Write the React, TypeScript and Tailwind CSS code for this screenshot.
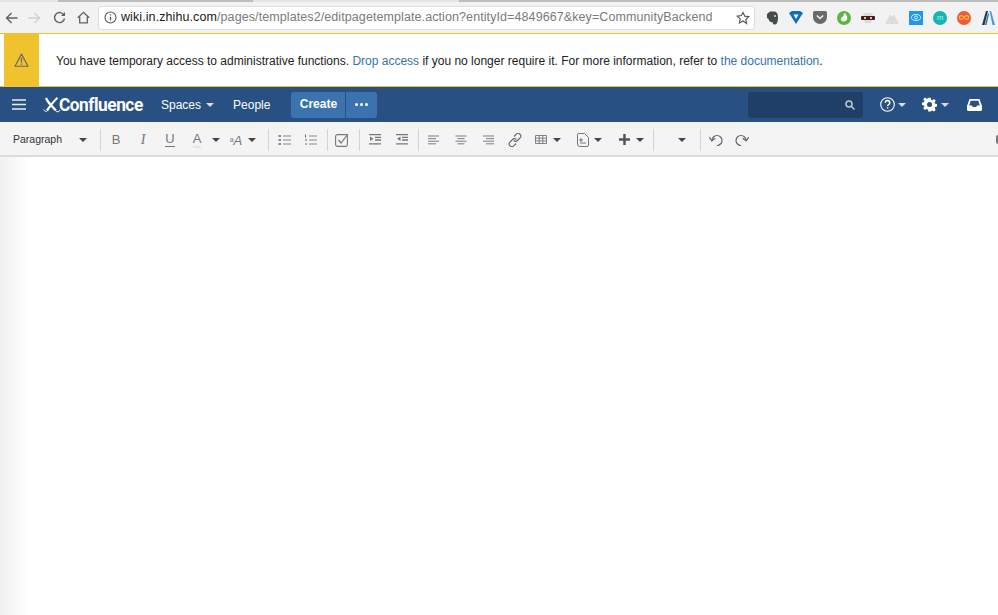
import React from "react";

const Caret = ({ c = "#444" }: { c?: string }) => (
  <svg width="8" height="4" viewBox="0 0 8 4" className="shrink-0"><path d="M0 0h8L4 4z" fill={c} /></svg>
);

const Slot = ({ w, children, className = "" }: { w: string; children?: React.ReactNode; className?: string }) => (
  <div className={`flex h-full shrink-0 items-center justify-center ${w} ${className}`}>{children}</div>
);

const Sep = () => <div className="h-[22px] w-px shrink-0 bg-[#d4d4d4]" />;

const Ico = ({ children, s = 14, w }: { children: React.ReactNode; s?: number; w?: number }) => (
  <svg width={w ?? s} height={s} viewBox={`0 0 ${w ?? s} ${s}`} fill="none" stroke="#6b6b6b" strokeWidth="1.2">{children}</svg>
);

const Lines = ({ rows }: { rows: [number, number][] }) => (
  <Ico s={10} w={12}>
    {rows.map(([a, b], i) => (
      <path key={i} d={`M${a} ${1 + i * 2.6}H${b}`} strokeWidth="1.1" stroke="#888" />
    ))}
  </Ico>
);

const ListIcon = ({ numbered }: { numbered?: boolean }) => (
  <Ico s={12} w={13}>
    <path d="M5 2h8M5 6h8M5 10h8" stroke="#888" />
    {numbered ? (
      <path d="M1.5 .5v3M1 6h2M1 10h2" stroke="#666" strokeWidth="1" />
    ) : (
      <path d="M.5 2h2.500M.5 6h2.500M.5 10h2.500" stroke="#666" strokeWidth="1.700" />
    )}
  </Ico>
);

const IndentIcon = ({ out }: { out?: boolean }) => (
  <Ico s={11} w={12}>
    <path d="M0 .7h12M6 3.400h6M6 6h6M0 9.800h12" stroke="#777" strokeWidth="1.300" />
    <path d={out ? "M4.500 2.500v4.500L1 4.800z" : "M1 2.500v4.500L4.500 4.800z"} fill="#777" stroke="none" />
  </Ico>
);

export default function App() {
  return (
    <div className="flex h-[615px] w-[998px] flex-col overflow-hidden bg-white font-['Liberation_Sans',sans-serif]">
      {/* Browser chrome */}
      <div className="flex h-[33px] shrink-0 flex-col bg-[#f2f2f2]">
        <div className="flex h-[2px] shrink-0 bg-[#e4e4e4]">
          <div className="ml-[58px] h-full w-[195px] bg-[#bdbdbd]" />
          <div className="ml-[206px] h-full w-[539px] bg-[#bdbdbd]" />
        </div>
        <div className="flex min-h-0 flex-1 items-center">
          <Slot w="w-[22px]">
            <svg width="13" height="12" viewBox="0 0 13 12" fill="none" stroke="#5f6368" strokeWidth="1.400"><path d="M12.500 6H1.500M6.500 1L1.500 6l5 5" /></svg>
          </Slot>
          <Slot w="w-[24px]">
            <svg width="13" height="12" viewBox="0 0 13 12" fill="none" stroke="#d0d0d0" strokeWidth="1.400"><path d="M.5 6h11M6.500 1l5 5-5 5" /></svg>
          </Slot>
          <Slot w="w-[24px]" className="ml-[1px]">
            <svg width="13" height="13" viewBox="0 0 13 13" fill="none" stroke="#5f6368" strokeWidth="1.400"><path d="M11 4.200A5 5 0 1 0 11.500 7.500" /><path d="M12 1v4H8z" fill="#5f6368" stroke="none" /></svg>
          </Slot>
          <Slot w="w-[24px]">
            <svg width="13" height="13" viewBox="0 0 13 13" fill="none" stroke="#5f6368" strokeWidth="1.300"><path d="M.8 6.800L6.500 1.300l5.700 5.500M2.700 5.800v6h7.600v-6" /></svg>
          </Slot>
          <div className="ml-[3px] flex h-[24px] w-[657px] shrink-0 items-center rounded-[3px] border border-[#dedede] bg-white pl-[5px]">
            <svg width="13" height="13" viewBox="0 0 13 13" fill="none" stroke="#555" strokeWidth="1.100" className="shrink-0"><circle cx="6.500" cy="6.500" r="5.500" /><path d="M6.500 5.800v3.700M6.500 3.300v1.200" strokeWidth="1.300" /></svg>
            <span className="ml-[4px] whitespace-nowrap text-[12.500px] tracking-[0.09px] text-[#7a7a7a]">
              <span className="text-[#1a1a1a]">wiki.in.zhihu.com</span>/pages/templates2/editpagetemplate.action?entityId=4849667&amp;key=CommunityBackend
            </span>
            <svg width="14" height="14" viewBox="0 0 24 24" fill="none" stroke="#555" strokeWidth="2" className="ml-auto mr-[4px] shrink-0"><path d="M12 2.500l3 6.300 6.800.9-5 4.800 1.300 6.900L12 17.100l-6.100 3.300 1.300-6.900-5-4.800 6.800-.9z" /></svg>
          </div>
          {/* Extensions */}
          <div className="ml-[5px] flex items-center">
            <Slot w="w-[24px]">
              <svg width="13" height="14" viewBox="0 0 13 14"><path d="M1 3l3-2.500h4C11 .5 12 3 12 6c0 4-.5 7-3 7.500-2 .3-2.500-1-2-2-2.500 0-4-1.500-4.500-3.500L1 7z" fill="#454b4f" /><circle cx="9" cy="5" r="1" fill="#ddd" /></svg>
            </Slot>
            <Slot w="w-[24px]">
              <svg width="14" height="13" viewBox="0 0 14 13"><path d="M0 2l3-2h8l3 2-7 11z" fill="#0f6fb5" /><path d="M4.500 3.500h5L7 8z" fill="#fff" /></svg>
            </Slot>
            <Slot w="w-[24px]">
              <svg width="14" height="13" viewBox="0 0 14 13"><path d="M0 1.500Q0 0 1.500 0h11Q14 0 14 1.500V6a7 7 0 0 1-14 0z" fill="#6a6a6a" /><path d="M3.800 4.500L7 7.500l3.200-3" fill="none" stroke="#eee" strokeWidth="1.600" /></svg>
            </Slot>
            <Slot w="w-[24px]">
              <svg width="14" height="14" viewBox="0 0 14 14"><circle cx="7" cy="7" r="7" fill="#5cb83c" /><path d="M7 2c1.500 1 2 1 2.500 2.500C11 6 10.500 10.500 7 10.500S3.500 7.500 4.500 6.500C6 6 7 4 7 2z" fill="#fff" /></svg>
            </Slot>
            <Slot w="w-[24px]">
              <svg width="14" height="10" viewBox="0 0 14 10"><path d="M3 0h8l1 3H2z" fill="#ddd" /><rect y="3" width="14" height="4" rx="1" fill="#4a1a14" /><circle cx="4" cy="5" r="1" fill="#fff" /><circle cx="10" cy="5" r="1" fill="#fff" /><path d="M3 7h8l-1 3H4z" fill="#d8d8d8" /></svg>
            </Slot>
            <Slot w="w-[24px]">
              <svg width="14" height="13" viewBox="0 0 14 13"><path d="M7 0l7 13H0z" fill="#dcdcdc" /><path d="M7 0l2 4-2 1-2-1z" fill="#f7f7f7" /></svg>
            </Slot>
            <Slot w="w-[24px]">
              <div className="flex h-[14px] w-[14px] items-center justify-center bg-[#1e97f3]">
                <svg width="10" height="7" viewBox="0 0 10 7" fill="none" stroke="#fff" strokeWidth=".8"><ellipse cx="5" cy="3.500" rx="4.500" ry="3" /><circle cx="5" cy="3.500" r="1.500" /></svg>
              </div>
            </Slot>
            <Slot w="w-[24px]">
              <div className="flex h-[14px] w-[14px] items-center justify-center rounded-full bg-[#16b5ad] text-[8px] leading-none text-[#bdeeea]">m</div>
            </Slot>
            <Slot w="w-[24px]">
              <div className="flex h-[14px] w-[14px] items-center justify-center rounded-full bg-[#ec5b3d]">
                <svg width="10" height="5" viewBox="0 0 10 5" fill="none" stroke="#f9c02e" strokeWidth="1.100"><path d="M5 2.500C4 1 3.200.6 2.300.6a1.900 1.900 0 0 0 0 3.800C3.200 4.400 4 4 5 2.500s1.800-1.900 2.700-1.900a1.900 1.900 0 0 1 0 3.800C6.800 4.400 6 4 5 2.500z" /></svg>
              </div>
            </Slot>
            <Slot w="w-[24px]">
              <svg width="13" height="14" viewBox="0 0 13 14"><path d="M4 0h2L2.500 14H0z" fill="#1d3a58" /><path d="M6 2l1 1-2.500 11H3z" fill="#2b6ea8" /><path d="M7.500 0h1.500L13 14h-2.500z" fill="#4a96d6" /></svg>
            </Slot>
          </div>
        </div>
      </div>

      {/* Warning banner */}
      <div className="flex h-[54px] shrink-0 border-y border-[#f0c22e] bg-white">
        <div className="ml-[4px] flex w-[35px] shrink-0 items-center justify-center bg-[#f0c22e]">
          <svg width="15" height="14" viewBox="0 0 14 13" fill="none" stroke="#6b6a5a" strokeWidth="1.100"><path d="M7 1L.9 12.300h12.200z" strokeLinejoin="round" /><path d="M7 4.500v4.300M7 9.700v1.200" strokeWidth="1.200" /></svg>
        </div>
        <div className="ml-[17px] flex items-center whitespace-nowrap pt-px text-[12px] text-[#222]">
          <span>You have temporary access to administrative functions.&nbsp;</span>
          <span className="text-[#3572b0]">Drop access</span>
          <span>&nbsp;if you no longer require it. For more information, refer to&nbsp;</span>
          <span className="text-[#3572b0]">the documentation</span>
          <span>.</span>
        </div>
      </div>

      {/* Nav */}
      <div className="flex h-[35px] shrink-0 items-center bg-[#285082] text-white">
        <svg width="14" height="11" viewBox="0 0 14 11" stroke="#e8edf3" strokeWidth="1.700" className="ml-[12px] shrink-0"><path d="M0 1h14M0 5.500h14M0 10h14" /></svg>
        <svg width="18" height="16" viewBox="0 0 18 16" fill="none" stroke="#fff" className="ml-[17px] shrink-0"><path d="M3 1c2 5 6 8 10 12.500M14.500 .8C11 4 7.500 8.500 4 13.500" strokeWidth="2.200" /><path d="M.8 12.500c1.200 2.500 3 2.500 4 .8M17 13c-1 2.200-3 2.500-4.200 .8" strokeWidth="1" /></svg>
        <span className="ml-[-2px] w-[85px] shrink-0 origin-left scale-x-[0.96] whitespace-nowrap font-['Roboto',sans-serif] text-[18px] font-bold tracking-[-0.5px] text-white">Confluence</span>
        <div className="ml-[17px] flex items-center gap-[5px] text-[12px]">
          <span>Spaces</span>
          <Caret c="#d5dde8" />
        </div>
        <span className="ml-[19px] text-[12px]">People</span>
        <div className="ml-[21px] flex h-[26px] items-center">
          <div className="flex h-full w-[54px] items-center justify-center rounded-l-[3px] bg-[#3b73af] pb-px text-[12px] font-bold">Create</div>
          <div className="ml-px flex h-full w-[31px] items-center justify-center gap-[2px] rounded-r-[3px] bg-[#3b73af]">
            <span className="h-[3px] w-[3px] rounded-full bg-white" />
            <span className="h-[3px] w-[3px] rounded-full bg-white" />
            <span className="h-[3px] w-[3px] rounded-full bg-white" />
          </div>
        </div>
        <div className="ml-[371px] flex h-[26px] w-[115px] items-center justify-end rounded-[3px] bg-[#203f67] pr-[8px]">
          <svg width="10" height="10" viewBox="0 0 10 10" fill="none" stroke="#c0cad6" strokeWidth="1.500"><circle cx="4" cy="4" r="3" /><path d="M6.300 6.300L9.500 9.500" /></svg>
        </div>
        <svg width="15" height="15" viewBox="0 0 15 15" fill="none" stroke="#fff" strokeWidth="1.100" className="ml-[17px] shrink-0"><circle cx="7.500" cy="7.500" r="6.800" /><path d="M5.300 5.800c0-3 4.500-3 4.500 0 0 1.600-2.200 1.800-2.200 3.300M7.600 10.200v1.400" strokeWidth="1.400" /></svg>
        <div className="ml-[3px]"><Caret c="#d5dde8" /></div>
        <svg width="15" height="15" viewBox="0 0 24 24" fill="#fff" className="ml-[16px] shrink-0"><path d="M10 1h4l.6 3.200 1.900.8 2.700-1.800 2.800 2.800-1.800 2.700.8 1.900 3 .6v4l-3 .6-.8 1.900 1.800 2.700-2.800 2.800-2.700-1.800-1.900.8L14 23h-4l-.6-3.200-1.900-.8-2.700 1.800-2.800-2.800 1.800-2.700-.8-1.900-3-.6v-4l3-.6.8-1.900-1.800-2.700 2.800-2.800 2.700 1.800 1.900-.8zM12 8a4 4 0 1 0 0 8 4 4 0 0 0 0-8z" fillRule="evenodd" /></svg>
        <div className="ml-[4px]"><Caret c="#d5dde8" /></div>
        <svg width="15" height="12" viewBox="0 0 15 12" className="ml-[18px] shrink-0"><path d="M2.500 0h10L15 7v3.500Q15 12 13.500 12h-12Q0 12 0 10.500V7zM3.700 1.800L2.200 6.500H5l.8 1.500h3.400l.8-1.500h2.800l-1.500-4.700z" fill="#fff" fillRule="evenodd" /></svg>
      </div>

      {/* Editor toolbar */}
      <div className="flex h-[35px] shrink-0 items-center border-b-2 border-[#dcdcdc] bg-[#f4f4f4] pt-[2px] text-[#333]">
        <span className="ml-[13px] w-[66px] shrink-0 text-[10.500px]">Paragraph</span>
        <Caret />
        <div className="w-[13px] shrink-0" />
        <Sep />
        <Slot w="w-[30px]"><span className="text-[13px] text-[#777]">B</span></Slot>
        <Slot w="w-[24px]"><span className="font-['Liberation_Serif',serif] text-[14px] italic text-[#777]">I</span></Slot>
        <Slot w="w-[30px]">
          <span className="border-b border-[#777] text-[13px] leading-[14px] text-[#777]">U</span>
        </Slot>
        <Slot w="w-[24px]">
          <span className="border-b-2 border-[#e6e6e6] text-[13px] leading-[14px] text-[#777]">A</span>
        </Slot>
        <Slot w="w-[14px]"><Caret /></Slot>
        <Slot w="w-[26px]">
          <span className="whitespace-nowrap text-[#777]"><span className="align-[3px] text-[7px] leading-none">a</span><span className="text-[13px] italic">A</span></span>
        </Slot>
        <Slot w="w-[6px]"><Caret /></Slot>
        <div className="w-[13px] shrink-0" />
        <Sep />
        <Slot w="w-[30px]"><ListIcon /></Slot>
        <Slot w="w-[22px]"><ListIcon numbered /></Slot>
        <div className="w-[6px] shrink-0" />
        <Sep />
        <Slot w="w-[28px]">
          <svg width="14" height="14" viewBox="0 0 14 14" fill="none" stroke="#777" strokeWidth="1.100"><rect x=".6" y="1.600" width="11.800" height="11.800" rx="1.800" /><path d="M3.500 7l2.500 3L13 1" strokeWidth="1.200" /></svg>
        </Slot>
        <div className="w-[3px] shrink-0" />
        <Sep />
        <Slot w="w-[30px]"><IndentIcon /></Slot>
        <Slot w="w-[24px]"><IndentIcon out /></Slot>
        <div className="w-[4px] shrink-0" />
        <Sep />
        <Slot w="w-[30px]"><Lines rows={[[0, 11], [0, 8], [0, 11], [0, 8]]} /></Slot>
        <Slot w="w-[24px]"><Lines rows={[[0.5, 11.5], [2.5, 9.500], [0.5, 11.5], [2.5, 9.500]]} /></Slot>
        <Slot w="w-[30px]"><Lines rows={[[1, 12], [4, 12], [1, 12], [4, 12]]} /></Slot>
        <Slot w="w-[24px]">
          <svg width="14" height="14" viewBox="0 0 14 14" fill="none" stroke="#666" strokeWidth="1.100"><path d="M6 3.500l2-2a2.600 2.600 0 0 1 4.300 3.200L9.500 7.500a2.600 2.600 0 0 1-3.800 0M8 10.500l-2 2A2.600 2.600 0 0 1 1.700 9.300L4.500 6.500a2.600 2.600 0 0 1 3.800 0" /></svg>
        </Slot>
        <Slot w="w-[28px]">
          <svg width="12" height="9" viewBox="0 0 12 9" fill="none" stroke="#777" strokeWidth=".9"><path d="M.5.500h11v8H.5zM.5 3.200h11M.5 5.900h11M4.200.5v8M7.800.5v8" /></svg>
        </Slot>
        <Slot w="w-[4px]"><Caret /></Slot>
        <Slot w="w-[24px]" className="ml-[12px]">
          <svg width="12" height="14" viewBox="0 0 12 14" fill="none" stroke="#777" strokeWidth="1"><path d="M1.500.5h6l4 4V12Q11.500 13.500 10 13.500H3Q.5 13.500.5 11V2Q.5.500 1.500.5z" /><path d="M3 6h2v2H3zM3 10h6" strokeWidth="1" /></svg>
        </Slot>
        <Slot w="w-[6px]"><Caret /></Slot>
        <Slot w="w-[20px]" className="ml-[13px]">
          <svg width="11" height="11" viewBox="0 0 11 11" stroke="#555" strokeWidth="2.500"><path d="M5.500 0v11M0 5.500h11" /></svg>
        </Slot>
        <Slot w="w-[8px]" className="ml-[2px]"><Caret /></Slot>
        <div className="w-[9px] shrink-0" />
        <Sep />
        <div className="w-[24px] shrink-0" />
        <Slot w="w-[8px]"><Caret /></Slot>
        <div className="w-[14px] shrink-0" />
        <Sep />
        <Slot w="w-[30px]">
          <svg width="14" height="12" viewBox="0 0 14 12" fill="none" stroke="#666" strokeWidth="1.200"><path d="M3 6.500A5 5 0 1 1 8 11.500" /><path d="M.3 3.200L2.800 7l3.500-2.700" /></svg>
        </Slot>
        <Slot w="w-[22px]">
          <svg width="14" height="12" viewBox="0 0 14 12" fill="none" stroke="#666" strokeWidth="1.200"><path d="M11 6.500A5 5 0 1 0 6 11.500" /><path d="M13.700 3.200L11.200 7 7.700 4.300" /></svg>
        </Slot>
        <div className="ml-auto h-[9px] w-[2px] shrink-0 rounded-l-full bg-[#777]" />
      </div>

      {/* Editor body */}
      <div className="flex-1 bg-linear-to-r from-[#f1f1f1] to-white to-[3%]" />
    </div>
  );
}
